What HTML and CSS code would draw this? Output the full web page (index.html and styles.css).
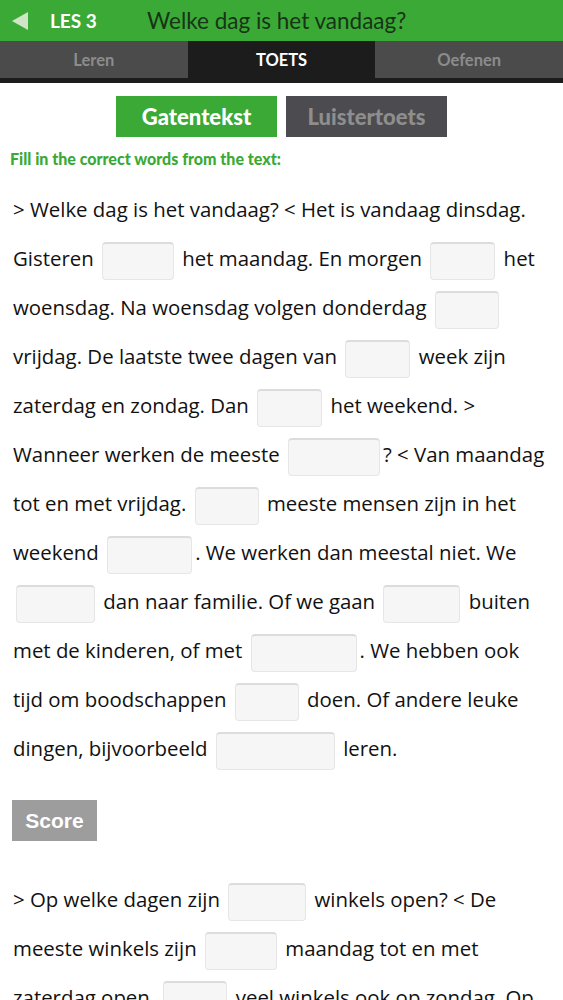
FILE: index.html
```html
<!DOCTYPE html>
<html lang="nl">
<head>
<meta charset="utf-8">
<title>LES 3</title>
<link rel="stylesheet" href="styles.css">
</head>
<body>
<header class="topbar">
  <svg class="back" width="16" height="18" viewBox="0 0 16 18"><polygon points="16,0 16,18 0,9" fill="#cfe6c6"/></svg>
  <span class="les">LES 3</span>
  <span class="title">Welke dag is het vandaag?</span>
</header>
<nav class="tabs">
  <div class="tab">Leren</div>
  <div class="tab active">TOETS</div>
  <div class="tab">Oefenen</div>
</nav>
<div class="modes">
  <div class="mode on">Gatentekst</div>
  <div class="mode off">Luistertoets</div>
</div>
<p class="instr">Fill in the correct words from the text:</p>
<p class="gap-text">&gt; Welke dag is het vandaag? &lt; Het is vandaag dinsdag.<br>
Gisteren <span class="blank w72"></span> het maandag. En morgen <span class="blank w65"></span> het<br>
woensdag. Na woensdag volgen donderdag <span class="blank w64"></span><br>
vrijdag. De laatste twee dagen van <span class="blank w65"></span> week zijn<br>
zaterdag en zondag. Dan <span class="blank w65"></span> het weekend. &gt;<br>
Wanneer werken de meeste <span class="blank w92"></span>? &lt; Van maandag<br>
tot en met vrijdag. <span class="blank w64"></span> meeste mensen zijn in het<br>
weekend <span class="blank w85"></span>. We werken dan meestal niet. We<br>
<span class="blank w79"></span> dan naar familie. Of we gaan <span class="blank w77"></span> buiten<br>
met de kinderen, of met <span class="blank w106"></span>. We hebben ook<br>
tijd om boodschappen <span class="blank w64"></span> doen. Of andere leuke<br>
dingen, bijvoorbeeld <span class="blank w119"></span> leren.</p>
<div class="score">Score</div>
<p class="gap-text second">&gt; Op welke dagen zijn <span class="blank w78"></span> winkels open? &lt; De<br>
meeste winkels zijn <span class="blank w72"></span> maandag tot en met<br>
zaterdag open. <span class="blank w64"></span> veel winkels ook op zondag. Op</p>
</body>
</html>
```
FILE: styles.css
```css
html, body {
  margin: 0;
  padding: 0;
  background: #ffffff;
}
body {
  font-family: Lato, "Open Sans", sans-serif;
  overflow: hidden;
}
.topbar {
  height: 41px;
  background: #3ba936;
  display: flex;
  align-items: center;
  padding-left: 12px;
}
.back {
  display: block;
}
.les {
  margin-left: 22px;
  color: #ffffff;
  font-weight: 700;
  font-size: 19px;
  width: 97px;
}
.title {
  color: #163516;
  font-size: 22.5px;
}
.tabs {
  display: flex;
  height: 37px;
  border-bottom: 5px solid #1c1c1c;
}
.tab {
  flex: 1;
  display: flex;
  align-items: center;
  justify-content: center;
  background: #4b4b4b;
  color: #8c8c8c;
  font-weight: 700;
  font-size: 16.5px;
}
.tab.active {
  background: #1c1c1c;
  color: #ffffff;
}
.modes {
  display: flex;
  justify-content: center;
  gap: 9px;
  margin-top: 13px;
}
.mode {
  width: 161px;
  height: 41px;
  display: flex;
  align-items: center;
  justify-content: center;
  font-weight: 900;
  font-size: 22px;
}
.mode.on {
  background: #3ba936;
  color: #ffffff;
}
.mode.off {
  background: #4c4b4f;
  color: #8e8e8e;
}
.instr {
  margin: 13px 0 0 10px;
  color: #3ba936;
  font-weight: 900;
  font-size: 16px;
  line-height: 18px;
}
.gap-text {
  margin: 17px 0 0 13px;
  font-family: "Open Sans", Lato, sans-serif;
  font-size: 20.4px;
  line-height: 49px;
  color: #111111;
}
.gap-text.second {
  margin-top: 34px;
}
.blank {
  display: inline-block;
  height: 38px;
  vertical-align: middle;
  box-sizing: border-box;
  border: 1px solid #e6e6e6;
  border-top: 2px solid #dcdcdc;
  border-radius: 4px;
  background: #f6f6f6;
  margin: 0 3px;
}
.w64 { width: 64px; }
.w65 { width: 65px; }
.w72 { width: 72px; }
.w77 { width: 77px; }
.w78 { width: 78px; }
.w79 { width: 79px; }
.w85 { width: 85px; }
.w92 { width: 92px; }
.w106 { width: 106px; }
.w119 { width: 119px; }
.score {
  margin: 27px 0 0 12px;
  width: 85px;
  height: 41px;
  display: flex;
  align-items: center;
  justify-content: center;
  background: #9d9d9d;
  color: #ffffff;
  font-family: "Liberation Sans", Arial, sans-serif;
  font-weight: 700;
  font-size: 21px;
}
```
